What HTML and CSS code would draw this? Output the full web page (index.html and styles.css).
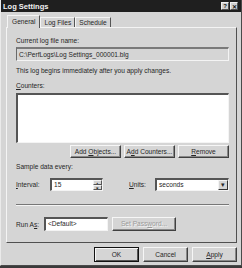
FILE: index.html
```html
<!DOCTYPE html>
<html lang="en">

<head>
  <meta charset="UTF-8">
  <title>Log Settings</title>
  <link rel="stylesheet" href="styles.css">
</head>

<body>
  <div class="dialog">
    <div class="titlebar">
      <span class="title">Log Settings</span>
      <span class="tb-btns"><span class="tb-btn">?</span><span class="tb-btn">&#x2715;</span></span>
    </div>
    <div class="content">
      <div class="tabs">
        <div class="tab active">General</div>
        <div class="tab">Log Files</div>
        <div class="tab">Schedule</div>
      </div>
      <div class="panel">
        <div class="label first">Current log file name:</div>
        <div class="field readonly">C:\PerfLogs\Log Settings_000001.blg</div>
        <div class="label note">This log begins immediately after you apply changes.</div>
        <div class="label counters"><u>C</u>ounters:</div>
        <div class="listbox"></div>
        <div class="btn-row">
          <div class="btn">Add <u>O</u>bjects...</div>
          <div class="btn">A<u>d</u>d Counters...</div>
          <div class="btn"><u>R</u>emove</div>
        </div>
        <div class="label sample">Sample data every:</div>
        <div class="interval-row">
          <span class="lbl-interval"><u>I</u>nterval:</span>
          <div class="spin">
            <span class="spin-val">15</span>
            <span class="spin-btns"><span>&#9652;</span><span>&#9662;</span></span>
          </div>
          <span class="lbl-units"><u>U</u>nits:</span>
          <div class="combo">
            <span class="combo-val">seconds</span>
            <span class="combo-btn">&#9662;</span>
          </div>
        </div>
        <div class="separator"></div>
        <div class="runas-row">
          <span class="lbl-runas">Run A<u>s</u>:</span>
          <div class="field white runas">&lt;Default&gt;</div>
          <div class="btn disabled">Set Pass<u>w</u>ord...</div>
        </div>
      </div>
      <div class="actions">
        <div class="btn default">OK</div>
        <div class="btn">Cancel</div>
        <div class="btn"><u>A</u>pply</div>
      </div>
    </div>
  </div>
</body>

</html>
```

FILE: styles.css
```css
* {
  margin: 0;
  padding: 0;
  box-sizing: border-box;
}

body {
  background: #3a3a3a;
  font-family: "Liberation Sans", Arial, sans-serif;
  font-size: 6.6px;
  color: #262626;
}

span,
div {
  white-space: nowrap;
}

.dialog {
  width: 242px;
  height: 266px;
  background: #d5d5d5;
  border-left: 1px solid #eaeaea;
  border-right: 1px solid #4a4a4a;
  border-bottom: 1px solid #4a4a4a;
}

.titlebar {
  height: 12px;
  background: #1f1f1f;
  display: flex;
  align-items: center;
  justify-content: space-between;
  padding: 0 3px 0 2px;
}

.title {
  color: #f2f2f2;
  font-weight: bold;
  font-size: 7.5px;
}

.tb-btns {
  display: flex;
  gap: 1px;
}

.tb-btn {
  width: 8px;
  height: 8px;
  background: #d0d0d0;
  color: #111;
  font-size: 6px;
  font-weight: bold;
  border: 1px solid;
  border-color: #f0f0f0 #505050 #505050 #f0f0f0;
  display: flex;
  align-items: center;
  justify-content: center;
}

.content {
  padding: 3px 0 0 5px;
}

/* tabs */
.tabs {
  display: flex;
  align-items: flex-end;
  height: 12px;
  padding-left: 1px;
}

.tab {
  height: 10px;
  line-height: 9px;
  padding: 0 3px;
  border: 1px solid;
  border-color: #f4f4f4 #555 transparent #f4f4f4;
  border-bottom: none;
}

.tab.active {
  height: 13px;
  line-height: 11px;
  margin-bottom: -1px;
  background: #d5d5d5;
  position: relative;
  z-index: 1;
  padding: 0 4px;
}

/* tab panel */
.panel {
  width: 231px;
  height: 216px;
  border: 1px solid;
  border-color: #f4f4f4 #505050 #505050 #f4f4f4;
  padding: 0 7px 0 9px;
  display: flex;
  flex-direction: column;
}

.label {
  height: 10px;
  line-height: 10px;
}

.label.first {
  margin-top: 8px;
}

.field {
  height: 14px;
  line-height: 11px;
  padding-left: 2px;
  border: 1px solid;
  border-color: #6a6a6a #f4f4f4 #f4f4f4 #6a6a6a;
  overflow: hidden;
}

.field.readonly {
  margin-top: 1px;
  background: #d5d5d5;
  border-top: 2px solid #7a7a7a;
}

.field.white {
  background: #fff;
  border-top: 2px solid #555;
  border-left: 2px solid #555;
}

.label.note {
  margin-top: 5px;
}

.label.counters {
  margin-top: 5px;
}

.listbox {
  margin-top: 2px;
  height: 50px;
  background: #fff;
  border: 1px solid;
  border-color: #555 #f4f4f4 #f4f4f4 #555;
  border-top-width: 2px;
  border-left-width: 2px;
}

.btn-row {
  margin-top: 2px;
  display: flex;
  justify-content: flex-end;
  gap: 3px;
}

.btn {
  height: 13px;
  line-height: 11px;
  text-align: center;
  border: 1px solid;
  border-color: #f6f6f6 #404040 #404040 #f6f6f6;
  box-shadow: inset -1px -1px #888;
}

.btn-row .btn {
  width: 51px;
}

.label.sample {
  margin-top: 4px;
}

.interval-row {
  margin-top: 6px;
  height: 13px;
  display: flex;
  align-items: center;
}

.lbl-interval {
  width: 34px;
}

.spin {
  width: 53px;
  height: 13px;
  background: #fff;
  border: 1px solid;
  border-color: #555 #f4f4f4 #f4f4f4 #555;
  border-top-width: 2px;
  border-left-width: 2px;
  display: flex;
  justify-content: space-between;
}

.spin-val {
  padding-left: 2px;
  line-height: 10px;
}

.spin-btns {
  width: 9px;
  display: flex;
  flex-direction: column;
}

.spin-btns span {
  flex: 1;
  background: #d5d5d5;
  font-size: 5px;
  line-height: 4px;
  text-align: center;
  border: 1px solid;
  border-color: #f4f4f4 #555 #555 #f4f4f4;
  overflow: hidden;
}

.lbl-units {
  margin-left: 26px;
  width: 26px;
}

.combo {
  flex: 1;
  height: 13px;
  background: #fff;
  border: 1px solid;
  border-color: #555 #f4f4f4 #f4f4f4 #555;
  border-top-width: 2px;
  border-left-width: 2px;
  display: flex;
  justify-content: space-between;
}

.combo-val {
  padding-left: 2px;
  line-height: 10px;
}

.combo-btn {
  width: 10px;
  background: #d5d5d5;
  font-size: 7px;
  line-height: 8px;
  text-align: center;
  border: 1px solid;
  border-color: #f4f4f4 #333 #333 #f4f4f4;
}

.separator {
  margin-top: 13px;
  height: 2px;
  border-top: 1px solid #777;
  border-bottom: 1px solid #f4f4f4;
}

.runas-row {
  margin-top: 11px;
  display: flex;
  align-items: center;
  height: 14px;
}

.lbl-runas {
  width: 28px;
}

.field.runas {
  width: 64px;
  line-height: 10px;
}

.btn.disabled {
  margin-left: 4px;
  width: 64px;
  height: 14px;
  line-height: 12px;
  color: #9a9a9a;
  text-shadow: 1px 1px #f4f4f4;
}

.actions {
  margin-top: 4px;
  display: flex;
  justify-content: flex-end;
  gap: 4px;
  padding-right: 4px;
}

.actions .btn {
  width: 45px;
  height: 15px;
  line-height: 13px;
}

.actions .btn.default {
  border: 1px solid #111;
  box-shadow: inset 1px 1px #f6f6f6, inset -1px -1px #555;
}
```
